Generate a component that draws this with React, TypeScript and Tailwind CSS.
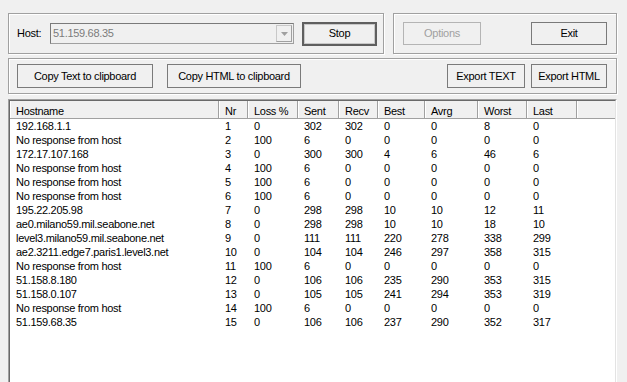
import React from "react";

const rows: string[][] = [
  ["192.168.1.1", "1", "0", "302", "302", "0", "0", "8", "0"],
  ["No response from host", "2", "100", "6", "0", "0", "0", "0", "0"],
  ["172.17.107.168", "3", "0", "300", "300", "4", "6", "46", "6"],
  ["No response from host", "4", "100", "6", "0", "0", "0", "0", "0"],
  ["No response from host", "5", "100", "6", "0", "0", "0", "0", "0"],
  ["No response from host", "6", "100", "6", "0", "0", "0", "0", "0"],
  ["195.22.205.98", "7", "0", "298", "298", "10", "10", "12", "11"],
  ["ae0.milano59.mil.seabone.net", "8", "0", "298", "298", "10", "10", "18", "10"],
  ["level3.milano59.mil.seabone.net", "9", "0", "111", "111", "220", "278", "338", "299"],
  ["ae2.3211.edge7.paris1.level3.net", "10", "0", "104", "104", "246", "297", "358", "315"],
  ["No response from host", "11", "100", "6", "0", "0", "0", "0", "0"],
  ["51.158.8.180", "12", "0", "106", "106", "235", "290", "353", "315"],
  ["51.158.0.107", "13", "0", "105", "105", "241", "294", "353", "319"],
  ["No response from host", "14", "100", "6", "0", "0", "0", "0", "0"],
  ["51.159.68.35", "15", "0", "106", "106", "237", "290", "352", "317"],
];

const headers = ["Hostname", "Nr", "Loss %", "Sent", "Recv", "Best", "Avrg", "Worst", "Last"];
const widths = ["w-[209px]", "w-[29px]", "w-[50px]", "w-[41px]", "w-[39px]", "w-[47px]", "w-[53px]", "w-[49px]", "w-[50px]"];

function Btn({ children, className = "", disabled = false }: { children: React.ReactNode; className?: string; disabled?: boolean }) {
  return (
    <div
      className={
        "flex shrink-0 items-center justify-center border border-[#7a7a7a] bg-[#f0f0f0] " +
        (disabled ? "text-[#a0a0a0] border-[#b4b4b4] " : "text-black ") +
        className
      }
    >
      {children}
    </div>
  );
}

export default function App() {
  return (
    <div
      className="relative h-[382px] w-[627px] overflow-hidden bg-[#f0f0f0] pl-[8px] pr-[10px] pt-[13px] text-[11px] tracking-[-0.3px] text-black"
      style={{ fontFamily: '"Liberation Sans", Arial, sans-serif' }}
    >
      {/* Row 1 */}
      <div className="flex h-[41px] gap-[9px]">
        <div className="flex w-[376px] items-center border border-[#a0a0a0] pl-[8px] shadow-[inset_1px_1px_0_#fff,1px_1px_0_#fff]">
          <span className="w-[33px]">Host:</span>
          <div className="relative flex h-[21px] w-[244px] items-center border border-[#a0a0a0] border-l-[#7a7a7a] border-t-[#7a7a7a] bg-[#f0f0f0] pl-[2px] text-[#7c7c7c]">
            51.159.68.35
            <div className="absolute right-[1px] top-[1px] flex h-[17px] w-[16px] items-center justify-center border border-[#c8c8c8] border-b-[#a0a0a0] border-r-[#a0a0a0] bg-[#f0f0f0]">
              <svg width="7" height="4" viewBox="0 0 7 4">
                <path d="M0 0 H7 L3.5 4 Z" fill="#a0a0a0" />
              </svg>
            </div>
          </div>
          <div className="ml-[8px] flex h-[24px] w-[75px] items-center justify-center border-2 border-[#5f5f5f] bg-[#f0f0f0] shadow-[inset_0_0_0_1px_#c8c8c8]">
            Stop
          </div>
        </div>
        <div className="flex flex-1 items-center justify-between border border-[#a0a0a0] px-[9px] shadow-[inset_1px_1px_0_#fff,1px_1px_0_#fff]">
          <Btn disabled className="h-[23px] w-[78px]">Options</Btn>
          <Btn className="h-[23px] w-[76px]">Exit</Btn>
        </div>
      </div>

      {/* Row 2 */}
      <div className="mt-[4px] flex h-[36px] items-center border border-[#a0a0a0] pl-[8px] pr-[9px] shadow-[inset_1px_1px_0_#fff,1px_1px_0_#fff]">
        <Btn className="h-[24px] w-[136px]">Copy Text to clipboard</Btn>
        <Btn className="ml-[14px] h-[24px] w-[134px]">Copy HTML to clipboard</Btn>
        <div className="flex-1" />
        <Btn className="h-[24px] w-[78px]">Export TEXT</Btn>
        <Btn className="ml-[6px] h-[24px] w-[76px]">Export HTML</Btn>
      </div>

      {/* List */}
      <div className="mt-[5px] h-[300px] border border-[#a0a0a0] border-b-white border-r-white">
        <div className="h-full border border-[#696969] border-b-[#e3e3e3] border-r-[#e3e3e3] bg-white">
          <div className="flex h-[18px] border-b border-[#a0a0a0] bg-[#f0f0f0]">
            {headers.map((h, i) => (
              <div
                key={h}
                className={widths[i] + " h-full shrink-0 border-r border-[#a0a0a0] pl-[6px] pt-[3px] leading-[14px] shadow-[inset_1px_0_0_#fff]"}
              >
                {h}
              </div>
            ))}
            <div className="h-full flex-1 shadow-[inset_1px_0_0_#fff]" />
          </div>
          {rows.map((r, ri) => (
            <div key={ri} className="flex h-[14px] leading-[14px]">
              {r.map((c, ci) => (
                <div key={ci} className={widths[ci] + " shrink-0 whitespace-nowrap pl-[6px]"}>
                  {c}
                </div>
              ))}
            </div>
          ))}
        </div>
      </div>
    </div>
  );
}
